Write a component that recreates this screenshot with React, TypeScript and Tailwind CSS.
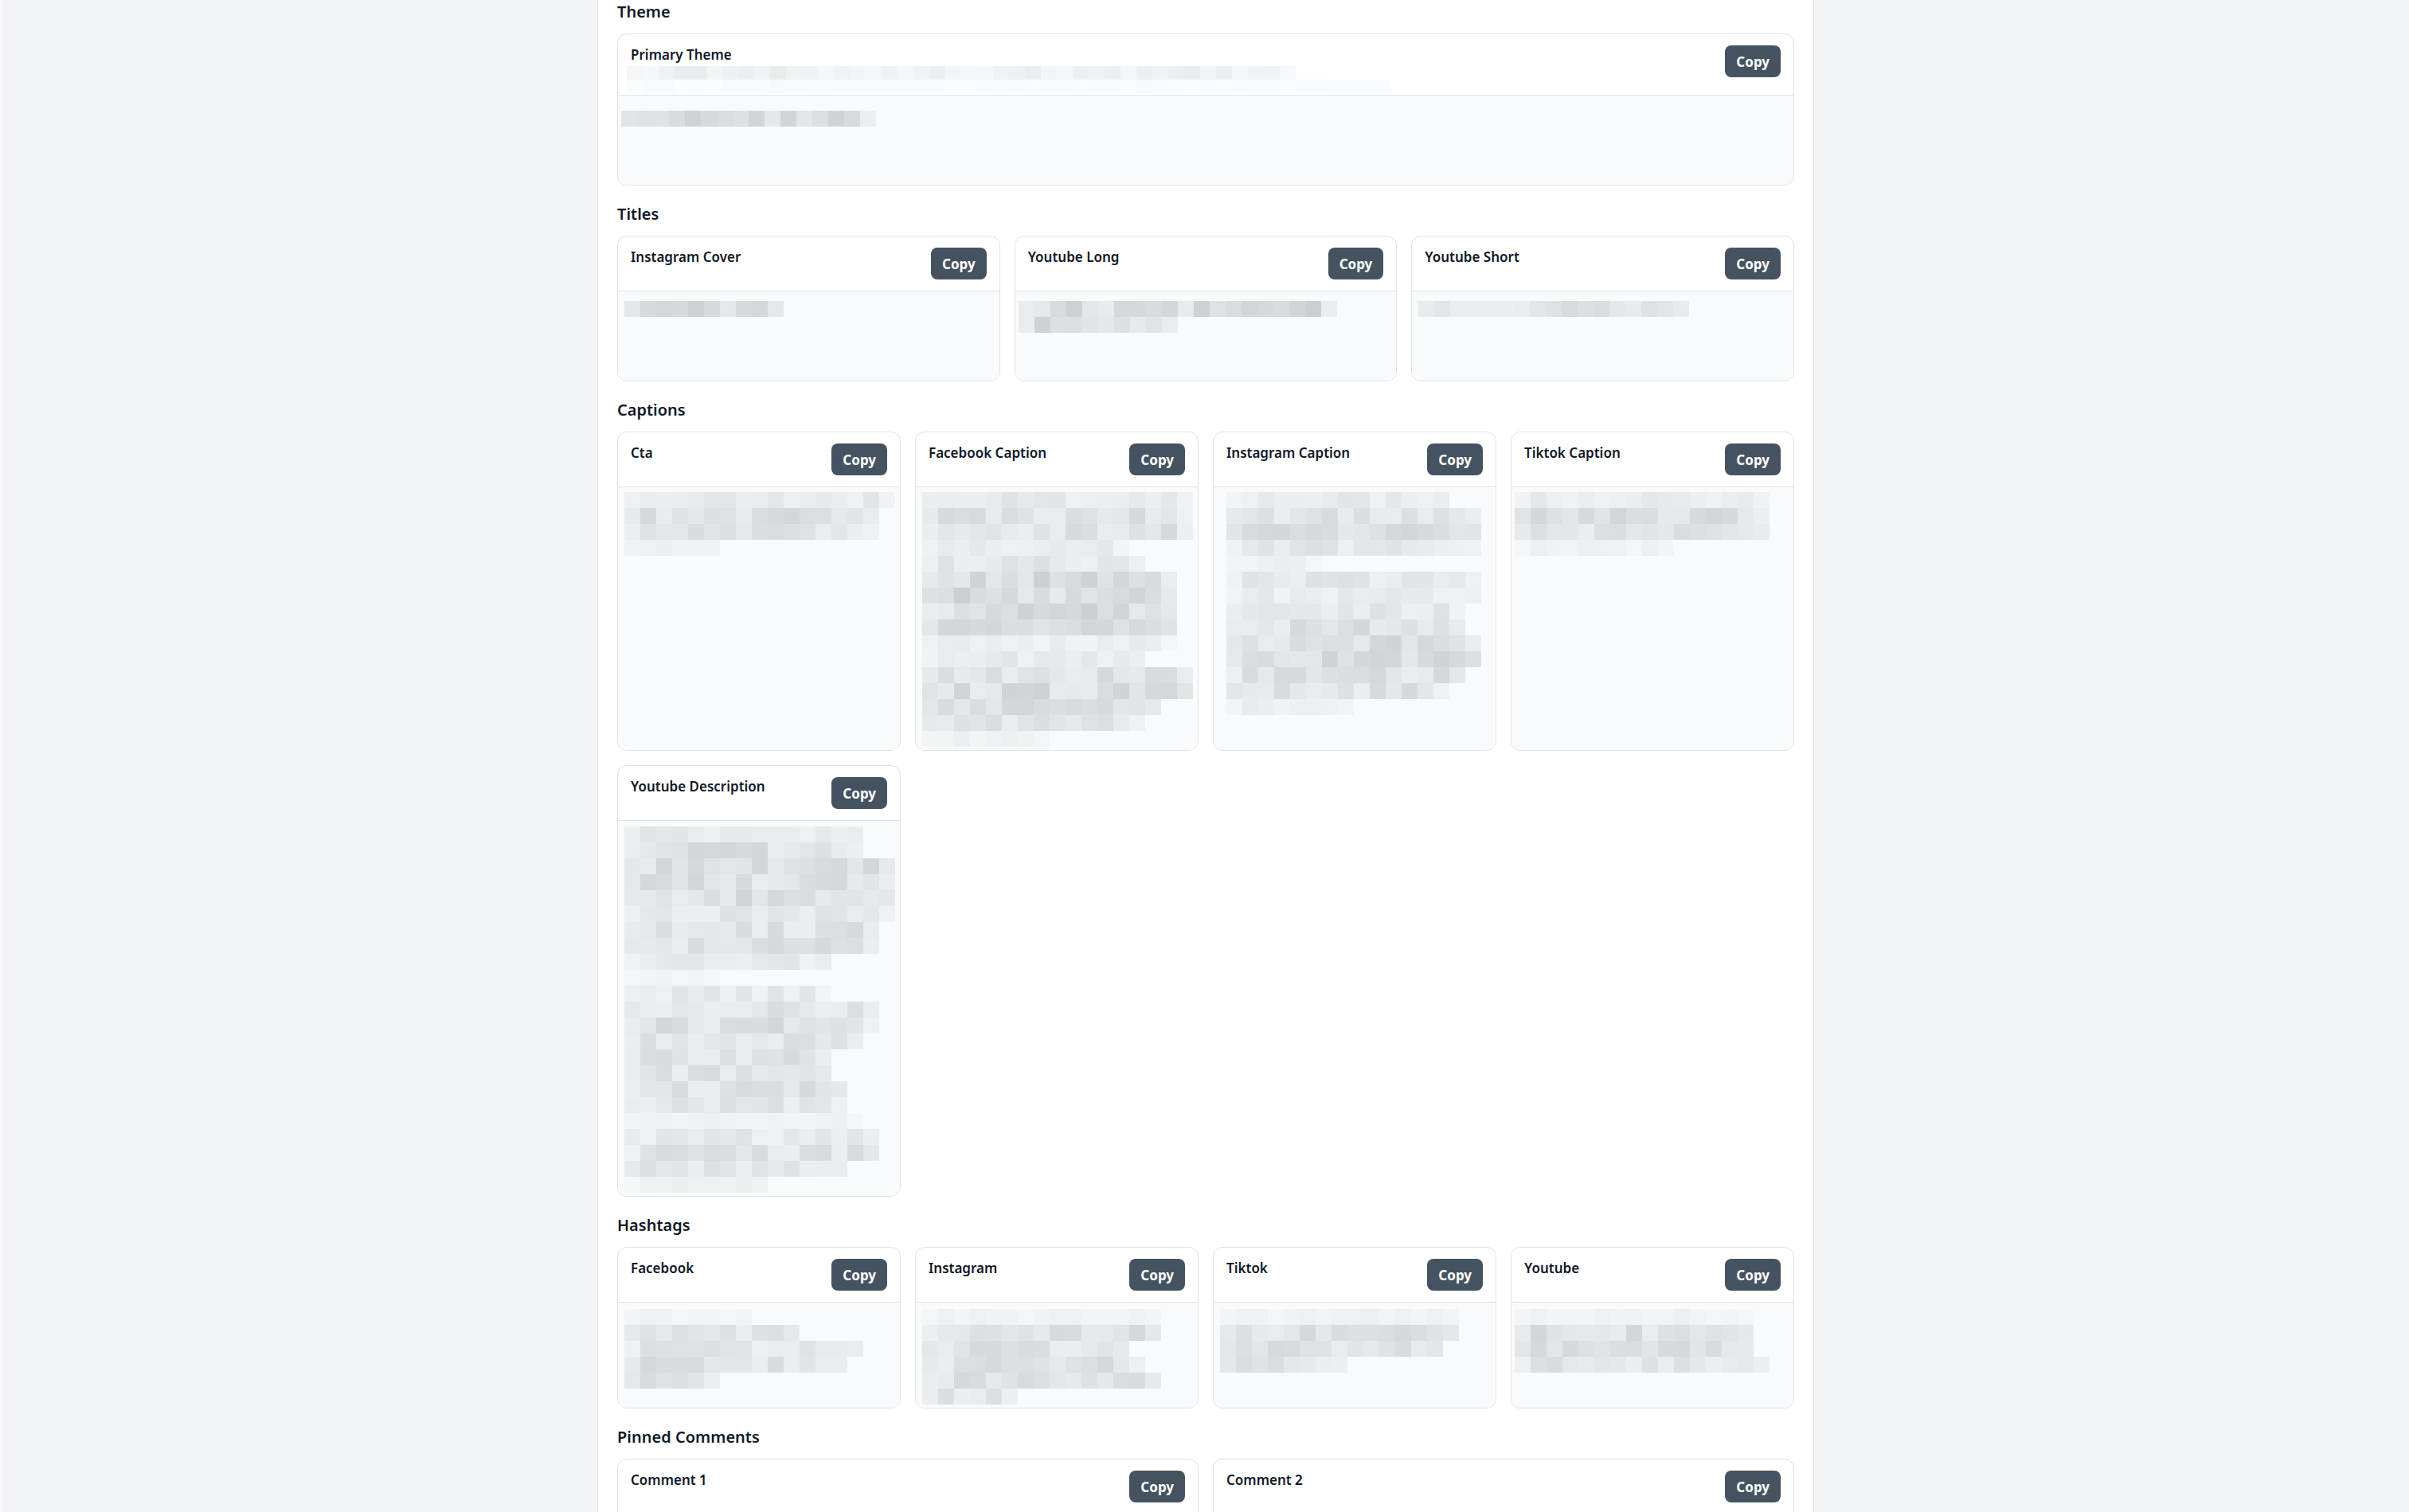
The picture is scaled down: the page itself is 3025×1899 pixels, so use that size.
import clsx from "clsx";

// [cells in the row, how dark the row reads 0..1]
type Row = [number, number];

type Field = {
  title: string;
  seed: number;
  rows: Row[];
  offset?: string;
};

// small deterministic PRNG so the redacted blocks render the same every time
function rng(seed: number) {
  let a = seed >>> 0;
  return () => {
    a = (a + 0x6d2b79f5) >>> 0;
    let t = a;
    t = Math.imul(t ^ (t >>> 15), t | 1);
    t ^= t + Math.imul(t ^ (t >>> 7), t | 61);
    return ((t ^ (t >>> 14)) >>> 0) / 4294967296;
  };
}

function Redacted({
  rows,
  seed,
  cell = "w-5 h-5",
  base = 247,
  className,
}: {
  rows: Row[];
  seed: number;
  cell?: string;
  base?: number;
  className?: string;
}) {
  const rand = rng(seed);
  return (
    <div className={clsx("flex flex-col", className)}>
      {rows.map(([len, d], i) => (
        <div key={i} className="flex">
          {Array.from({ length: len }, (_, j) => {
            const edge = j === 0 || j === len - 1 ? 0.6 : 1;
            const depth = Math.min(1, d * 1.2);
            const v = Math.round(base - depth * edge * (16 + rand() * 34));
            return (
              <span
                key={j}
                className={clsx("block shrink-0", cell)}
                style={{ backgroundColor: `rgb(${v}, ${Math.min(255, v + 1)}, ${Math.min(255, v + 3)})` }}
              />
            );
          })}
        </div>
      ))}
    </div>
  );
}

function CopyButton() {
  return (
    <button
      type="button"
      className="flex h-10 shrink-0 items-center rounded-lg bg-[#455361] px-3.5 text-[17px] font-bold leading-none text-white"
    >
      Copy
    </button>
  );
}

function FieldCard({ field, short }: { field: Field; short?: boolean }) {
  return (
    <div className="flex flex-col overflow-hidden rounded-xl border border-[#dde2ea] bg-white">
      <div className="flex items-start justify-between border-b border-[#dde2ea] px-4 py-3.5">
        <h3 className="text-[17px] font-semibold leading-6 text-gray-900">{field.title}</h3>
        <CopyButton />
      </div>
      <div className={clsx("flex-1 bg-gray-50 px-2 pb-1 pt-1.5", short && "min-h-[112px]")}>
        <Redacted rows={field.rows} seed={field.seed} className={field.offset} />
      </div>
    </div>
  );
}

function Section({ title, children }: { title: string; children: React.ReactNode }) {
  return (
    <section>
      <h2 className="mb-3 text-[20px] font-semibold leading-[30px] text-gray-900">{title}</h2>
      {children}
    </section>
  );
}

const titles: Field[] = [
  { title: "Instagram Cover", seed: 11, offset: "mt-1.5", rows: [[10, 0.75]] },
  { title: "Youtube Long", seed: 12, offset: "mt-1.5 -ml-1", rows: [[20, 0.7], [10, 0.7]] },
  { title: "Youtube Short", seed: 13, offset: "mt-1.5", rows: [[17, 0.55]] },
];

const captions: Field[] = [
  { title: "Cta", seed: 21, rows: [[17, 0.35], [16, 0.6], [16, 0.5], [6, 0.2]] },
  {
    title: "Facebook Caption",
    seed: 22,
    rows: [
      [17, 0.4], [17, 0.6], [17, 0.6], [13, 0.3], [14, 0.45], [16, 0.7], [16, 0.7], [16, 0.7],
      [16, 0.7], [16, 0.25], [14, 0.4], [17, 0.6], [17, 0.65], [15, 0.6], [14, 0.5], [8, 0.2],
    ],
  },
  {
    title: "Instagram Caption",
    seed: 23,
    offset: "ml-2",
    rows: [
      [14, 0.35], [16, 0.5], [16, 0.6], [16, 0.45], [6, 0.2], [16, 0.45], [16, 0.3],
      [15, 0.4], [15, 0.6], [16, 0.65], [16, 0.7], [15, 0.6], [14, 0.55], [8, 0.25],
    ],
  },
  { title: "Tiktok Caption", seed: 24, offset: "-ml-1", rows: [[16, 0.3], [16, 0.6], [16, 0.5], [10, 0.15]] },
  {
    title: "Youtube Description",
    seed: 25,
    offset: "mt-px",
    rows: [
      [15, 0.4], [15, 0.6], [17, 0.6], [17, 0.65], [17, 0.6], [17, 0.45], [16, 0.55], [16, 0.55],
      [13, 0.35], [6, 0.1], [13, 0.35], [16, 0.5], [16, 0.6], [15, 0.5], [13, 0.55], [13, 0.5],
      [14, 0.55], [14, 0.45], [15, 0.15], [16, 0.4], [16, 0.5], [14, 0.5], [9, 0.2],
    ],
  },
];

const hashtags: Field[] = [
  { title: "Facebook", seed: 31, offset: "mt-0.5", rows: [[8, 0.15], [11, 0.5], [15, 0.45], [14, 0.55], [6, 0.5]] },
  { title: "Instagram", seed: 32, offset: "mt-0.5", rows: [[15, 0.15], [15, 0.55], [13, 0.55], [14, 0.55], [15, 0.6], [6, 0.45]] },
  { title: "Tiktok", seed: 33, offset: "mt-0.5", rows: [[15, 0.15], [15, 0.6], [14, 0.55], [8, 0.5]] },
  { title: "Youtube", seed: 34, offset: "mt-0.5 -ml-1", rows: [[15, 0.15], [15, 0.6], [15, 0.55], [16, 0.5]] },
];

const comments: Field[] = [
  { title: "Comment 1", seed: 41, rows: [[30, 0.5], [22, 0.5]] },
  { title: "Comment 2", seed: 42, rows: [[28, 0.5], [18, 0.5]] },
];

export default function App() {
  return (
    <div className="flex h-[1899px] overflow-hidden bg-gray-100 font-['Noto_Sans','Open_Sans',sans-serif] text-gray-900">
      <div className="w-[3px] shrink-0 bg-[#fbfbfc]" />
      <div className="flex-1">
        <main className="mx-auto flex min-h-full w-[1528px] flex-col gap-[21px] border-x border-[#dde2ea] bg-white px-6 pb-10">
          <Section title="Theme">
            <div className="flex flex-col overflow-hidden rounded-xl border border-[#dde2ea] bg-white">
              <div className="flex items-start justify-between border-b border-[#dde2ea] px-4 pb-0.5 pt-3.5">
                <div className="flex flex-col">
                  <h3 className="text-[17px] font-semibold leading-6 text-gray-900">Primary Theme</h3>
                  <Redacted
                    seed={1}
                    base={252}
                    cell="w-5 h-[17px]"
                    className="-ml-[5px] mt-0.5"
                    rows={[[42, 0.3], [48, 0.06]]}
                  />
                </div>
                <CopyButton />
              </div>
              <div className="min-h-[112px] bg-gray-50 px-1 pb-1 pt-1.5">
                <Redacted seed={2} className="mt-[13px]" rows={[[16, 0.7]]} />
              </div>
            </div>
          </Section>

          <Section title="Titles">
            <div className="grid grid-cols-3 gap-[18px]">
              {titles.map((f) => (
                <FieldCard key={f.title} field={f} short />
              ))}
            </div>
          </Section>

          <Section title="Captions">
            <div className="grid grid-cols-4 gap-[18px]">
              {captions.map((f) => (
                <FieldCard key={f.title} field={f} />
              ))}
            </div>
          </Section>

          <Section title="Hashtags">
            <div className="grid grid-cols-4 gap-[18px]">
              {hashtags.map((f) => (
                <FieldCard key={f.title} field={f} />
              ))}
            </div>
          </Section>

          <Section title="Pinned Comments">
            <div className="grid grid-cols-2 gap-[18px]">
              {comments.map((f) => (
                <FieldCard key={f.title} field={f} short />
              ))}
            </div>
          </Section>
        </main>
      </div>
    </div>
  );
}
